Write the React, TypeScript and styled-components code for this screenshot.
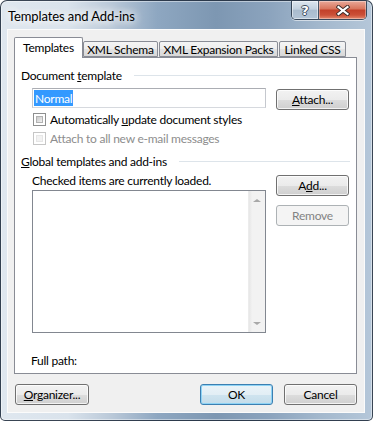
import React from 'react';
import styled, { createGlobalStyle } from 'styled-components';

const GlobalStyle = createGlobalStyle`
  html, body {
    margin: 0;
    padding: 0;
    overflow: hidden;
    background: #ffffff;
  }
  * { box-sizing: border-box; }
`;

const font = `'Lato', 'Noto Sans', 'Liberation Sans', sans-serif`;

const Window = styled.div`
  width: 373px;
  height: 421px;
  border: 1px solid rgba(28, 40, 56, 0.85);
  border-radius: 7px 7px 5px 5px;
  overflow: hidden;
  display: flex;
  flex-direction: column;
  font-family: ${font};
  font-size: 12px;
  letter-spacing: -0.25px;
  color: #000;
  background:
    linear-gradient(90deg,
      #dfe7ef 0%, #dae3ec 18%, #b9c8d8 30%, #8ea7c1 42%,
      #7d97b2 58%, #8ba3bd 72%, #a3b8cd 86%, #b5c7d9 100%);
  box-shadow: inset 0 0 0 1px rgba(255, 255, 255, 0.45);
`;

const TitleBar = styled.div`
  height: 28px;
  display: flex;
  align-items: flex-start;
  padding: 0 5px 0 7px;
`;

const Title = styled.div`
  align-self: center;
  margin-top: 2px;
  font-size: 13px;
  letter-spacing: -0.1px;
  text-shadow: 0 0 8px #ffffff, 0 0 10px #ffffff, 0 0 12px #ffffff;
`;

const CaptionButtons = styled.div`
  margin-left: auto;
  display: flex;
  border: 1px solid rgba(30, 44, 62, 0.8);
  border-top: none;
  border-radius: 0 0 5px 5px;
  overflow: hidden;
  box-shadow: 0 1px 0 rgba(255, 255, 255, 0.55);
`;

const HelpButton = styled.div`
  width: 27px;
  height: 18px;
  display: flex;
  align-items: center;
  justify-content: center;
  border-right: 1px solid rgba(40, 54, 72, 0.8);
  background: linear-gradient(#dde6ef 0%, #c3d1df 45%, #a9bbce 52%, #b3c4d6 100%);
  box-shadow: inset 0 0 0 1px rgba(255, 255, 255, 0.5);
  color: #ffffff;
  font-family: 'DejaVu Sans', sans-serif;
  font-weight: bold;
  font-size: 13px;
  letter-spacing: 0;
  text-shadow:
    1px 0 0 #3d4c5e, -1px 0 0 #3d4c5e, 0 1px 0 #3d4c5e, 0 -1px 0 #3d4c5e;
`;

const CloseButton = styled.div`
  width: 47px;
  height: 18px;
  display: flex;
  align-items: center;
  justify-content: center;
  background: linear-gradient(#e9a999 0%, #d9775f 42%, #c3412a 52%, #cb5038 78%, #e48a6e 100%);
  box-shadow: inset 0 0 0 1px rgba(255, 255, 255, 0.35);
`;

const Client = styled.div`
  flex: 1;
  margin: 0 7px 7px 6px;
  background: #f0f0f0;
  border: 1px solid rgba(255, 255, 255, 0.7);
  display: flex;
  flex-direction: column;
  padding: 7px 7px 0 6px;
`;

const TabStrip = styled.div`
  height: 20px;
  display: flex;
  align-items: flex-end;
  position: relative;
  z-index: 1;
`;

const Tab = styled.div<{ $active?: boolean; $w: number }>`
  width: ${p => p.$w}px;
  height: ${p => (p.$active ? 21 : 16)}px;
  margin-bottom: ${p => (p.$active ? -1 : 0)}px;
  margin-right: 1px;
  border: 1px solid #898c95;
  border-bottom: ${p => (p.$active ? 'none' : '1px solid #898c95')};
  border-radius: 2px 2px 0 0;
  background: ${p =>
    p.$active ? '#ffffff' : 'linear-gradient(#f4f4f4 0%, #eeeeee 50%, #e3e3e3 51%, #d8d8d8 100%)'};
  display: flex;
  align-items: center;
  justify-content: center;
  padding-bottom: ${p => (p.$active ? 2 : 0)}px;
  &:first-child { margin-right: 0; }
`;

const Panel = styled.div`
  height: 317px;
  width: 343px;
  border: 1px solid #898c95;
  background: #ffffff;
  padding: 9px 6px 0 6px;
  display: flex;
  flex-direction: column;
`;

const GroupHeader = styled.div<{ $top?: number }>`
  height: 16px;
  margin-top: ${p => p.$top ?? 0}px;
  display: flex;
  align-items: center;
  gap: 12px;
`;

const Rule = styled.div`
  flex: 1;
  height: 1px;
  background: #dde4ea;
`;

const U = styled.span`
  text-decoration: underline;
  text-underline-offset: 1px;
`;

const Indented = styled.div`
  padding-left: 11px;
`;

const InputRow = styled.div`
  margin-top: 5px;
  height: 22px;
  display: flex;
  align-items: flex-start;
  gap: 10px;
`;

const TextBox = styled.div`
  width: 234px;
  height: 20px;
  border: 1px solid #abadb3;
  border-color: #abadb3 #c5c8ce #d6d9de #c5c8ce;
  background: #ffffff;
  padding: 1px 1px;
  display: flex;
  align-items: stretch;
`;

const Selected = styled.span`
  background: #3399ff;
  color: #ffffff;
  padding: 0 1px;
  display: flex;
  align-items: center;
`;

const Button = styled.div<{ $default?: boolean; $disabled?: boolean; $w?: number; $top?: number }>`
  width: ${p => p.$w ?? 73}px;
  height: 21px;
  margin-top: ${p => p.$top ?? 0}px;
  border: 1px solid ${p => (p.$disabled ? '#adb2b5' : p.$default ? '#3c7fb1' : '#707070')};
  border-radius: 3px;
  display: flex;
  align-items: center;
  justify-content: center;
  color: ${p => (p.$disabled ? '#838383' : '#000')};
  background: ${p =>
    p.$disabled
      ? '#f4f4f4'
      : p.$default
      ? 'linear-gradient(#eaf3f8 0%, #e2eef5 50%, #cfe4ef 51%, #c4dcea 100%)'
      : 'linear-gradient(#f2f2f2 0%, #ebebeb 50%, #dddddd 51%, #cfcfcf 100%)'};
  box-shadow: ${p =>
    p.$disabled
      ? 'none'
      : p.$default
      ? 'inset 0 0 0 1px #8ed3f5'
      : 'inset 0 0 0 1px rgba(255,255,255,0.75)'};
`;

const CheckRow = styled.div<{ $disabled?: boolean }>`
  height: 19px;
  display: flex;
  align-items: center;
  gap: 4px;
  padding-left: 1px;
  color: ${p => (p.$disabled ? '#8d8d8d' : '#000')};
`;

const CheckBox = styled.div<{ $disabled?: boolean }>`
  width: 13px;
  height: 13px;
  border: 1px solid ${p => (p.$disabled ? '#c6c6c6' : '#8e8f8f')};
  background: #ffffff;
  padding: 2px;
  &::after {
    content: '';
    display: block;
    width: 100%;
    height: 100%;
    background: ${p =>
      p.$disabled ? '#f2f2f2' : 'linear-gradient(135deg, #cbcbcb 0%, #e0e0e0 60%, #f3f3f3 100%)'};
    border: 1px solid ${p => (p.$disabled ? '#e6e6e6' : '#b2b2b2')};
    box-sizing: border-box;
  }
`;

const Columns = styled.div`
  display: grid;
  grid-template-columns: 234px 73px;
  column-gap: 10px;
`;

const LeftCol = styled.div`
  padding-top: 4px;
  display: flex;
  flex-direction: column;
`;

const RightCol = styled.div`
  padding-top: 6px;
  display: flex;
  flex-direction: column;
  gap: 9px;
`;

const TextLine = styled.div<{ $top?: number }>`
  height: 16px;
  line-height: 16px;
  margin-top: ${p => p.$top ?? 0}px;
`;

const ListBox = styled.div`
  margin-top: 1px;
  width: 234px;
  height: 143px;
  border: 1px solid #828790;
  background: #ffffff;
  display: flex;
  justify-content: flex-end;
`;

const ScrollBar = styled.div`
  width: 17px;
  height: 100%;
  background: linear-gradient(90deg, #e6e6e6 0%, #f2f2f2 20%, #f2f2f2 100%);
  border-left: 1px solid #ececec;
  display: flex;
  flex-direction: column;
  justify-content: space-between;
  align-items: center;
  padding: 8px 0 7px;
`;

const Arrow = styled.div<{ $down?: boolean }>`
  width: 0;
  height: 0;
  border-left: 4px solid transparent;
  border-right: 4px solid transparent;
  ${p => (p.$down ? 'border-top: 3px solid #a8a8a8;' : 'border-bottom: 3px solid #a8a8a8;')}
`;

const FullPath = styled.div`
  margin-top: 20px;
  padding-left: 10px;
  height: 16px;
  line-height: 16px;
`;

const Footer = styled.div`
  margin-top: 10px;
  padding-left: 1px;
  display: flex;
  align-items: center;
  gap: 11px;
`;

const Spacer = styled.div`
  flex: 1;
`;

export default function App() {
  return (
    <>
      <GlobalStyle />
      <Window>
        <TitleBar>
          <Title>Templates and Add-ins</Title>
          <CaptionButtons>
            <HelpButton>?</HelpButton>
            <CloseButton>
              <svg width="14" height="11" viewBox="0 0 14 11">
                <path
                  d="M2.5 2 L11.5 9 M11.5 2 L2.5 9"
                  stroke="#3a2a28"
                  strokeWidth="4"
                  strokeLinecap="square"
                />
                <path
                  d="M2.5 2 L11.5 9 M11.5 2 L2.5 9"
                  stroke="#ffffff"
                  strokeWidth="2.2"
                  strokeLinecap="square"
                />
              </svg>
            </CloseButton>
          </CaptionButtons>
        </TitleBar>
        <Client>
          <TabStrip>
            <Tab $active $w={69}>Templates</Tab>
            <Tab $w={75}>XML Schema</Tab>
            <Tab $w={119}>XML Expansion Packs</Tab>
            <Tab $w={67}>Linked CSS</Tab>
          </TabStrip>
          <Panel>
            <GroupHeader>
              <span>
                Document <U>t</U>emplate
              </span>
              <Rule />
            </GroupHeader>
            <Indented>
              <InputRow>
                <TextBox>
                  <Selected>Normal</Selected>
                </TextBox>
                <Button $top={1}>
                  <span>
                    <U>A</U>ttach...
                  </span>
                </Button>
              </InputRow>
              <CheckRow>
                <CheckBox />
                <span>
                  Automatically <U>u</U>pdate document styles
                </span>
              </CheckRow>
              <CheckRow $disabled>
                <CheckBox $disabled />
                <span>Attach to all new e-mail messages</span>
              </CheckRow>
            </Indented>
            <GroupHeader $top={5}>
              <span>
                <U>G</U>lobal templates and add-ins
              </span>
              <Rule />
            </GroupHeader>
            <Indented>
              <Columns>
                <LeftCol>
                  <TextLine>Checked items are currently loaded.</TextLine>
                  <ListBox>
                    <ScrollBar>
                      <Arrow />
                      <Arrow $down />
                    </ScrollBar>
                  </ListBox>
                </LeftCol>
                <RightCol>
                  <Button>
                    <span>
                      A<U>d</U>d...
                    </span>
                  </Button>
                  <Button $disabled>Remove</Button>
                </RightCol>
              </Columns>
            </Indented>
            <FullPath>Full path:</FullPath>
          </Panel>
          <Footer>
            <Button $w={74}>
              <span>
                <U>O</U>rganizer...
              </span>
            </Button>
            <Spacer />
            <Button $default>OK</Button>
            <Button>Cancel</Button>
          </Footer>
        </Client>
      </Window>
    </>
  );
}
